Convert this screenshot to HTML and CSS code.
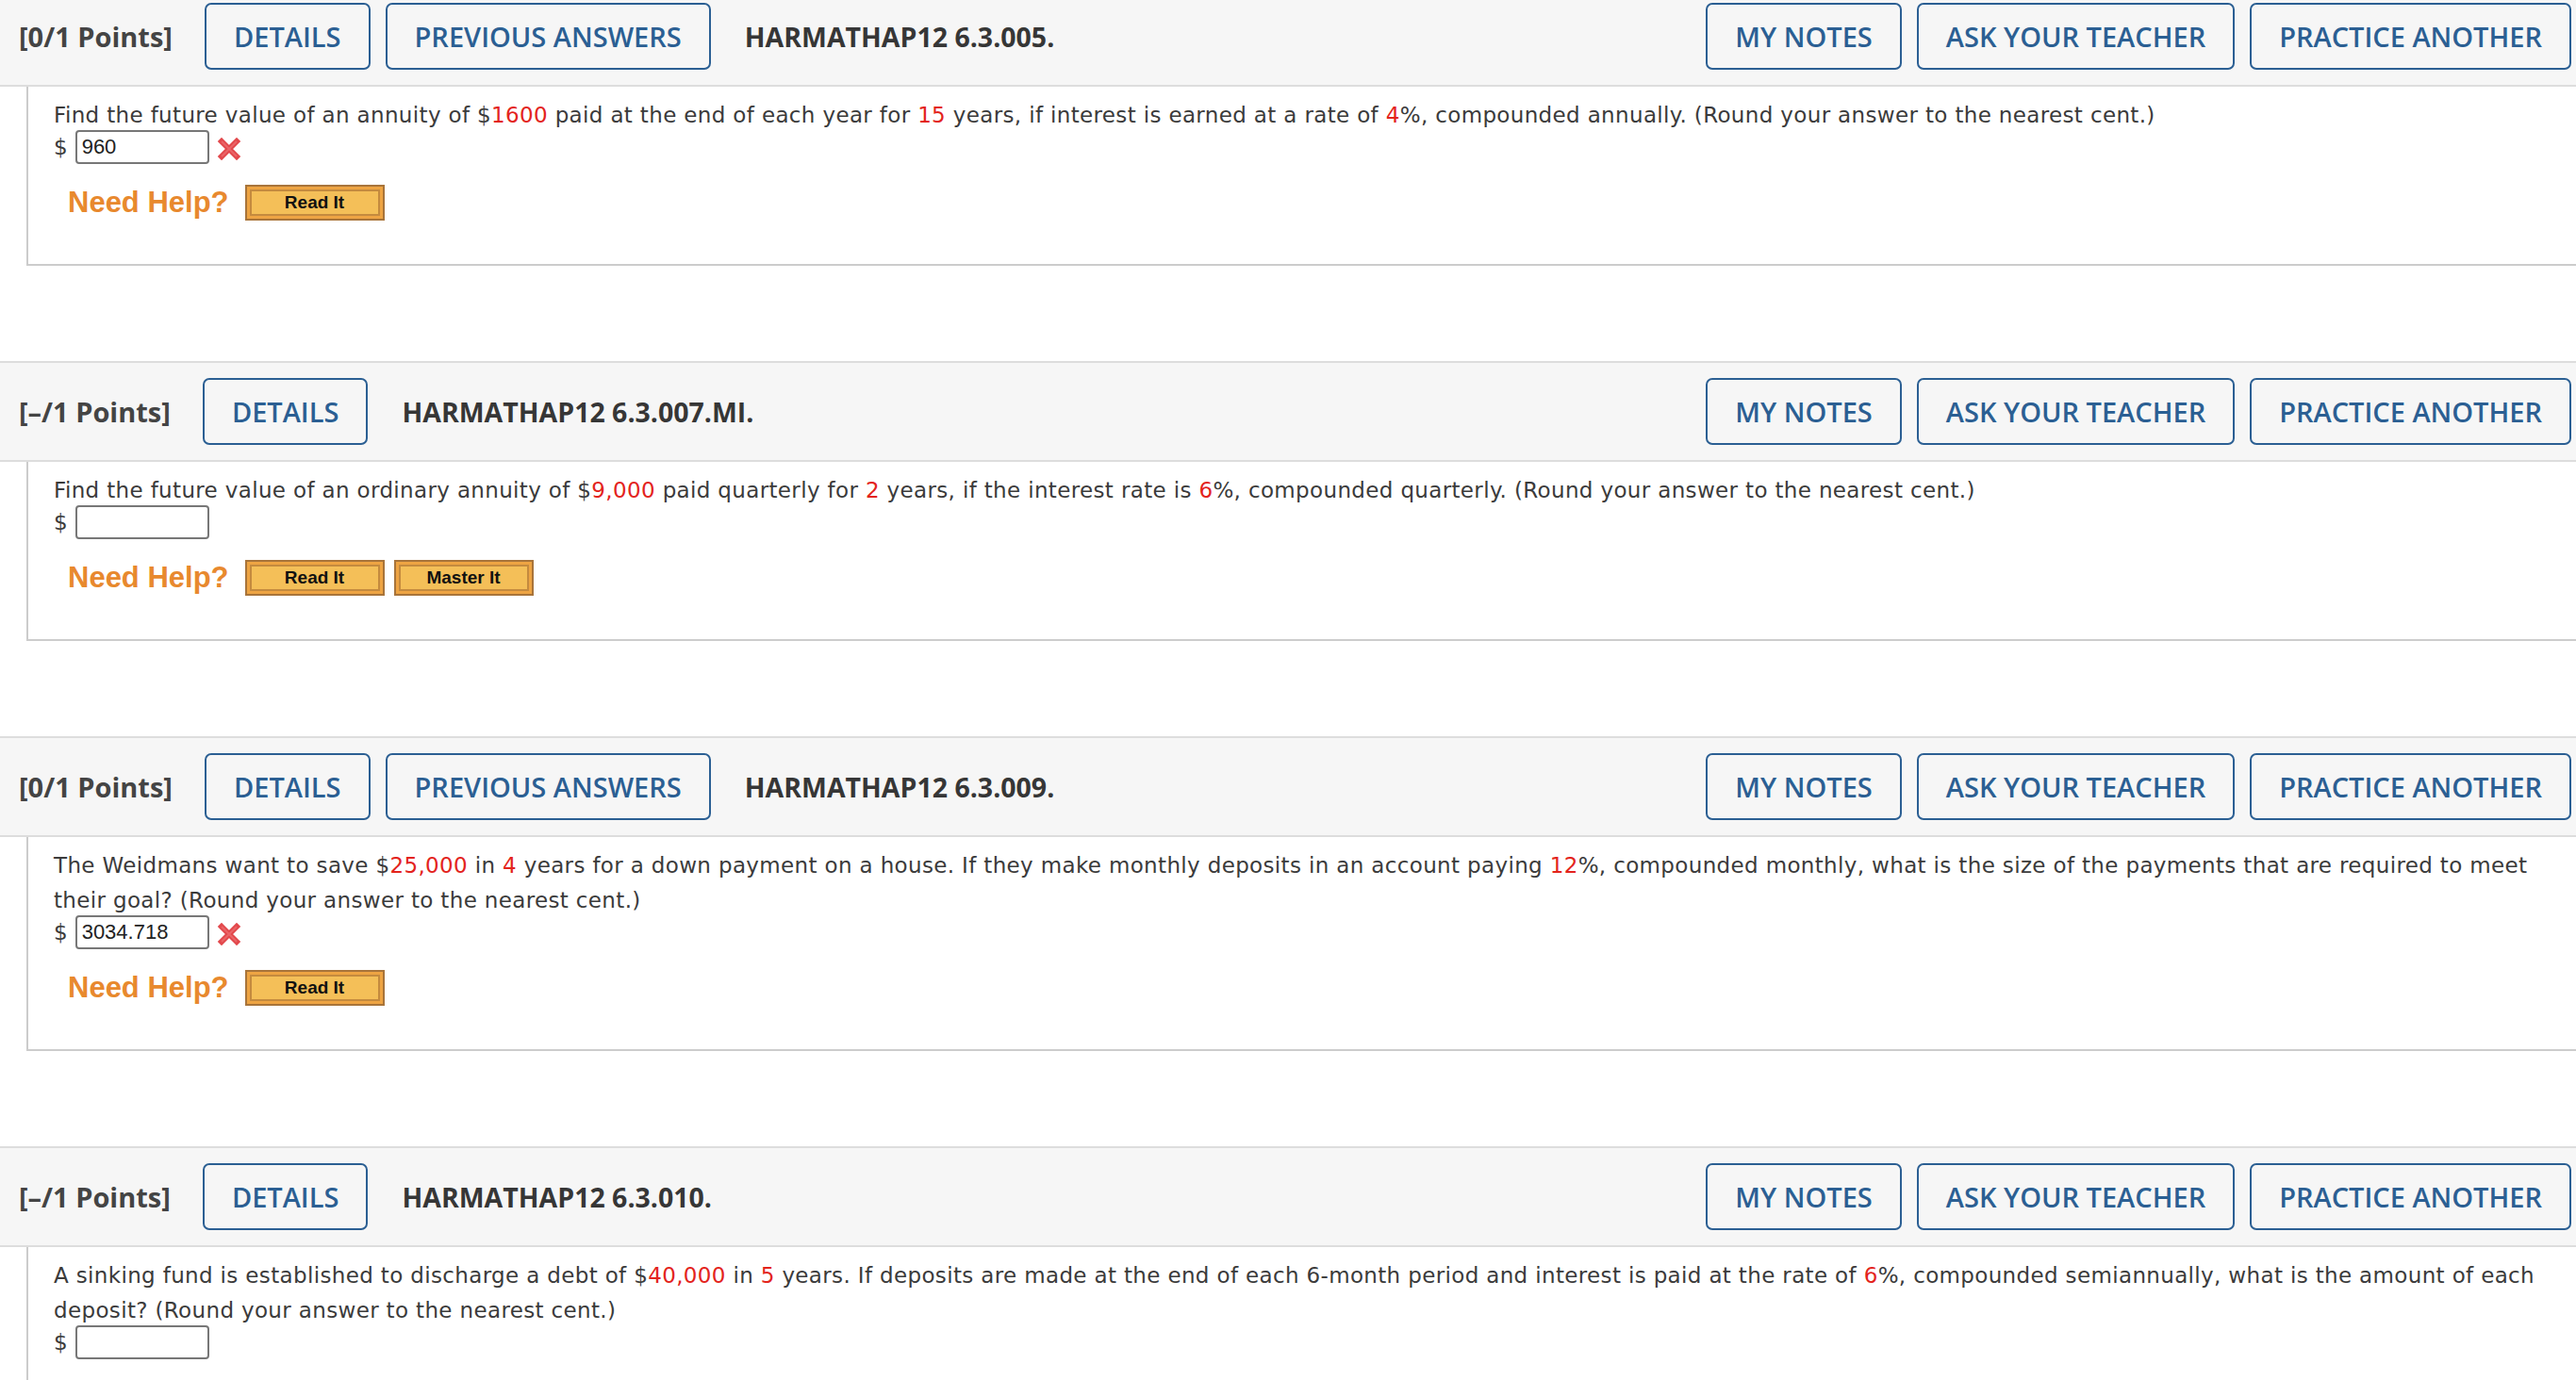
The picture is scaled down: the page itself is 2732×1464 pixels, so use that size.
FILE: index.html
```html
<!DOCTYPE html>
<html lang="en">
<head>
    <meta charset="UTF-8">
    <title>Assignment</title>
    <link rel="stylesheet" href="styles.css">
</head>
<body>
    <div class="page">

        <!-- question 5 -->
        <div class="question">
            <div class="qhead">
                <span class="pts">[0/1 Points]</span>
                <button class="hbtn">DETAILS</button>
                <button class="hbtn">PREVIOUS ANSWERS</button>
                <span class="qid">HARMATHAP12 6.3.005.</span>
                <div class="tools">
                    <button class="hbtn">MY NOTES</button>
                    <button class="hbtn">ASK YOUR TEACHER</button>
                    <button class="hbtn">PRACTICE ANOTHER</button>
                </div>
            </div>
            <div class="qbody">
                <p>Find the future value of an annuity of $<span class="num">1600</span> paid at the end of each year for <span class="num">15</span> years, if interest is earned at a rate of <span class="num">4</span>%, compounded annually. (Round your answer to the nearest cent.)</p>
                <div class="answer">
                    <span class="cur">$</span>
                    <input class="ans" type="text" value="960">
                    <svg class="wrong" width="26" height="24" viewBox="0 0 26 24">
                        <path d="M5 4 L21 20 M21 4 L5 20" stroke="#e2474b" stroke-width="6" stroke-linecap="square" fill="none"/>
                        <path d="M5 4 L21 20 M21 4 L5 20" stroke="#f07a7c" stroke-width="2" fill="none" opacity="0.6"/>
                    </svg>
                </div>
                <div class="help">
                    <span class="need">Need Help?</span>
                    <button class="hlp"><span>Read It</span></button>
                </div>
            </div>
        </div>

        <!-- question 7 -->
        <div class="question">
            <div class="qhead">
                <span class="pts">[–/1 Points]</span>
                <button class="hbtn">DETAILS</button>
                <span class="qid">HARMATHAP12 6.3.007.MI.</span>
                <div class="tools">
                    <button class="hbtn">MY NOTES</button>
                    <button class="hbtn">ASK YOUR TEACHER</button>
                    <button class="hbtn">PRACTICE ANOTHER</button>
                </div>
            </div>
            <div class="qbody">
                <p>Find the future value of an ordinary annuity of $<span class="num">9,000</span> paid quarterly for <span class="num">2</span> years, if the interest rate is <span class="num">6</span>%, compounded quarterly. (Round your answer to the nearest cent.)</p>
                <div class="answer">
                    <span class="cur">$</span>
                    <input class="ans" type="text" value="">
                </div>
                <div class="help">
                    <span class="need">Need Help?</span>
                    <button class="hlp"><span>Read It</span></button>
                    <button class="hlp"><span>Master It</span></button>
                </div>
            </div>
        </div>

        <!-- question 9 -->
        <div class="question">
            <div class="qhead">
                <span class="pts">[0/1 Points]</span>
                <button class="hbtn">DETAILS</button>
                <button class="hbtn">PREVIOUS ANSWERS</button>
                <span class="qid">HARMATHAP12 6.3.009.</span>
                <div class="tools">
                    <button class="hbtn">MY NOTES</button>
                    <button class="hbtn">ASK YOUR TEACHER</button>
                    <button class="hbtn">PRACTICE ANOTHER</button>
                </div>
            </div>
            <div class="qbody">
                <p>The Weidmans want to save $<span class="num">25,000</span> in <span class="num">4</span> years for a down payment on a house. If they make monthly deposits in an account paying <span class="num">12</span>%, compounded monthly, what is the size of the payments that are required to meet their goal? (Round your answer to the nearest cent.)</p>
                <div class="answer">
                    <span class="cur">$</span>
                    <input class="ans" type="text" value="3034.718">
                    <svg class="wrong" width="26" height="24" viewBox="0 0 26 24">
                        <path d="M5 4 L21 20 M21 4 L5 20" stroke="#e2474b" stroke-width="6" stroke-linecap="square" fill="none"/>
                        <path d="M5 4 L21 20 M21 4 L5 20" stroke="#f07a7c" stroke-width="2" fill="none" opacity="0.6"/>
                    </svg>
                </div>
                <div class="help">
                    <span class="need">Need Help?</span>
                    <button class="hlp"><span>Read It</span></button>
                </div>
            </div>
        </div>

        <!-- question 10 -->
        <div class="question">
            <div class="qhead">
                <span class="pts">[–/1 Points]</span>
                <button class="hbtn">DETAILS</button>
                <span class="qid">HARMATHAP12 6.3.010.</span>
                <div class="tools">
                    <button class="hbtn">MY NOTES</button>
                    <button class="hbtn">ASK YOUR TEACHER</button>
                    <button class="hbtn">PRACTICE ANOTHER</button>
                </div>
            </div>
            <div class="qbody">
                <p>A sinking fund is established to discharge a debt of $<span class="num">40,000</span> in <span class="num">5</span> years. If deposits are made at the end of each 6-month period and interest is paid at the rate of <span class="num">6</span>%, compounded semiannually, what is the amount of each deposit? (Round your answer to the nearest cent.)</p>
                <div class="answer">
                    <span class="cur">$</span>
                    <input class="ans" type="text" value="">
                </div>
                <div class="help">
                    <span class="need">Need Help?</span>
                    <button class="hlp"><span>Read It</span></button>
                </div>
            </div>
        </div>

    </div>
</body>
</html>
```

FILE: styles.css
```css
body {
    margin: 0;
    background-color: #fff;
    font-family: "DejaVu Sans", Verdana, sans-serif;
    color: #3b3b3b;
    overflow: hidden;
}
.page {
    margin-top: -15px;
}
.question {
    margin-bottom: 101px;
}
.qhead {
    display: flex;
    align-items: center;
    padding: 16px 5px 16px 20px;
    background-color: #f6f6f6;
    border-top: 2px solid #ddd;
    border-bottom: 2px solid #ddd;
    font-family: "Open Sans", sans-serif;
}
.pts {
    font-size: 29px;
    font-weight: 700;
    color: #444;
    margin-right: 34px;
}
.qid {
    font-size: 28.5px;
    font-weight: 700;
    color: #363636;
    margin-left: 20px;
}
.hbtn {
    height: 71px;
    box-sizing: border-box;
    padding: 0 29px;
    margin-right: 16px;
    background-color: #f6f6f6;
    border: 2px solid #2b5f93;
    border-radius: 7px;
    color: #2b5f93;
    font-family: "Open Sans", sans-serif;
    font-size: 29px;
    font-weight: 600;
    cursor: pointer;
}
.tools {
    display: flex;
    margin-left: auto;
}
.tools .hbtn:last-child {
    margin-right: 0;
}
.qbody {
    margin-left: 28px;
    padding: 12px 30px 46px 27px;
    border-left: 2px solid #ccc;
    border-bottom: 2px solid #ccc;
}
.qbody p {
    margin: 0;
    font-size: 23px;
    letter-spacing: 0.35px;
    line-height: 37px;
}
.num {
    color: #e3231c;
}
.answer {
    display: flex;
    align-items: center;
    margin-top: -3px;
}
.cur {
    font-size: 23px;
    margin-right: 8px;
}
.ans {
    width: 142px;
    height: 36px;
    box-sizing: border-box;
    padding: 0 5px;
    border: 2px solid #777;
    border-radius: 4px;
    font-family: "Liberation Sans", Arial, sans-serif;
    font-size: 22px;
    color: #222;
}
.wrong {
    margin-left: 8px;
    margin-top: 4px;
}
.help {
    display: flex;
    align-items: center;
    gap: 10px;
    margin-top: 22px;
    padding-left: 15px;
}
.need {
    font-family: "Liberation Sans", Arial, sans-serif;
    font-size: 31px;
    font-weight: 700;
    color: #e8892e;
    margin-right: 7px;
}
.hlp {
    width: 148px;
    height: 38px;
    box-sizing: border-box;
    padding: 3px;
    background-color: #eea443;
    border: 2px solid #a8743a;
    cursor: pointer;
}
.hlp span {
    display: block;
    height: 100%;
    box-sizing: border-box;
    border: 2px solid #c48a3e;
    background-color: #f4bf58;
    font-family: "Liberation Sans", Arial, sans-serif;
    font-size: 19px;
    font-weight: 700;
    line-height: 24px;
    color: #111;
}
```
